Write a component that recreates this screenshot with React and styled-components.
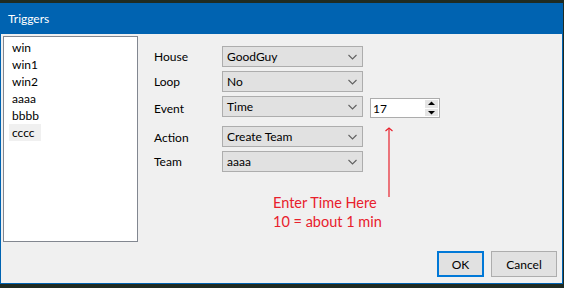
import React from "react";
import styled, { createGlobalStyle } from "styled-components";

const GlobalStyle = createGlobalStyle`
  html, body {
    margin: 0;
    padding: 0;
    background: #1f2b22;
  }
  * {
    box-sizing: border-box;
  }
`;

const Desktop = styled.div`
  width: 564px;
  height: 288px;
  padding-top: 3px;
  background: #1f2b22;
  font-family: "Segoe UI", Lato, "Noto Sans", sans-serif;
  font-size: 12px;
  color: #000;
`;

const Window = styled.div`
  width: 563px;
  height: 281px;
  display: flex;
  flex-direction: column;
  border: 1px solid #0063b1;
  border-top: none;
  background: #f0f0f0;
`;

const TitleBar = styled.div`
  height: 31px;
  flex: none;
  display: flex;
  align-items: center;
  padding-left: 8px;
  margin: 0 -1px;
  background: #0063b1;
  color: #fff;
  font-size: 12px;
`;

const Body = styled.div`
  flex: 1;
  position: relative;
  display: flex;
  padding: 2px 0 0 2px;
`;

const ListBox = styled.div`
  width: 135px;
  height: 206px;
  flex: none;
  padding: 2px 0 0 5px;
  background: #fff;
  border: 1px solid #828790;
`;

const ListItem = styled.div`
  width: ${(p) => (p.selected ? "32px" : "auto")};
  height: 17px;
  line-height: 17px;
  padding-left: 3px;
  background: ${(p) => (p.selected ? "#f0f0f0" : "transparent")};
`;

const Form = styled.div`
  flex: 1;
  display: flex;
  flex-direction: column;
  padding: 10px 0 0 16px;
`;

const Row = styled.div`
  display: flex;
  align-items: center;
  height: 21px;
  margin-bottom: ${(p) => p.gap || 4}px;
`;

const Label = styled.div`
  width: 68px;
  flex: none;
  padding-top: ${(p) => p.drop || 0}px;
`;

const Combo = styled.div`
  width: 141px;
  height: 21px;
  display: flex;
  align-items: center;
  justify-content: space-between;
  padding: 0 5px 0 4px;
  background: #e1e1e1;
  border: 1px solid #adadad;
`;

const SpinBox = styled.div`
  width: 70px;
  height: 20px;
  margin: 3px 0 0 7px;
  display: flex;
  align-items: center;
  justify-content: space-between;
  padding: 0 1px 0 2px;
  background: #fff;
  border: 1px solid #acacac;
`;

const SpinButtons = styled.div`
  width: 13px;
  height: 16px;
  display: flex;
  flex-direction: column;
  gap: 1px;
`;

const SpinButton = styled.div`
  flex: 1;
  display: flex;
  align-items: center;
  justify-content: center;
  background: #e5e5e5;
`;

const Note = styled.div`
  margin: 17px 0 0 119px;
  color: #e8202c;
  font-size: 14.5px;
  line-height: 19px;
`;

const Arrow = styled.svg`
  position: absolute;
  left: 383px;
  top: 93px;
`;

const Footer = styled.div`
  position: absolute;
  right: 5px;
  bottom: 6px;
  display: flex;
  gap: 7px;
`;

const Button = styled.div`
  width: ${(p) => p.w}px;
  height: 26px;
  display: flex;
  align-items: center;
  justify-content: center;
  background: #e1e1e1;
  border: ${(p) => (p.primary ? "2px solid #0078d7" : "1px solid #adadad")};
`;

function Chevron() {
  return (
    <svg width="9" height="6" viewBox="0 0 9 6">
      <path d="M0.5 1 L4.5 5 L8.5 1" fill="none" stroke="#606060" strokeWidth="1.1" />
    </svg>
  );
}

function Select({ value }) {
  return (
    <Combo>
      <span>{value}</span>
      <Chevron />
    </Combo>
  );
}

const items = ["win", "win1", "win2", "aaaa", "bbbb", "cccc"];

export default function App() {
  return (
    <>
      <GlobalStyle />
      <Desktop>
        <Window>
          <TitleBar>Triggers</TitleBar>
          <Body>
            <ListBox>
              {items.map((it) => (
                <ListItem key={it} selected={it === "cccc"}>
                  {it}
                </ListItem>
              ))}
            </ListBox>
            <Form>
              <Row>
                <Label>House</Label>
                <Select value="GoodGuy" />
              </Row>
              <Row>
                <Label>Loop</Label>
                <Select value="No" />
              </Row>
              <Row gap={9}>
                <Label drop={3}>Event</Label>
                <Select value="Time" />
                <SpinBox>
                  <span>17</span>
                  <SpinButtons>
                    <SpinButton>
                      <svg width="7" height="5" viewBox="0 0 7 5">
                        <path d="M0 4 L3.5 0.5 L7 4 Z" fill="#000" />
                      </svg>
                    </SpinButton>
                    <SpinButton>
                      <svg width="7" height="5" viewBox="0 0 7 5">
                        <path d="M0 1 L3.5 4.5 L7 1 Z" fill="#000" />
                      </svg>
                    </SpinButton>
                  </SpinButtons>
                </SpinBox>
              </Row>
              <Row>
                <Label drop={2}>Action</Label>
                <Select value="Create Team" />
              </Row>
              <Row>
                <Label>Team</Label>
                <Select value="aaaa" />
              </Row>
              <Note>
                Enter Time Here
                <br />
                10 = about 1 min
              </Note>
            </Form>
            <Arrow width="10" height="72" viewBox="0 0 10 72">
              <path d="M5 1.5 V70" stroke="#e8202c" strokeWidth="1.2" fill="none" />
              <path d="M1.5 4 L5 1 L8.5 4" stroke="#e8202c" strokeWidth="1.2" fill="none" />
            </Arrow>
            <Footer>
              <Button primary w={47}>OK</Button>
              <Button w={66}>Cancel</Button>
            </Footer>
          </Body>
        </Window>
      </Desktop>
    </>
  );
}
